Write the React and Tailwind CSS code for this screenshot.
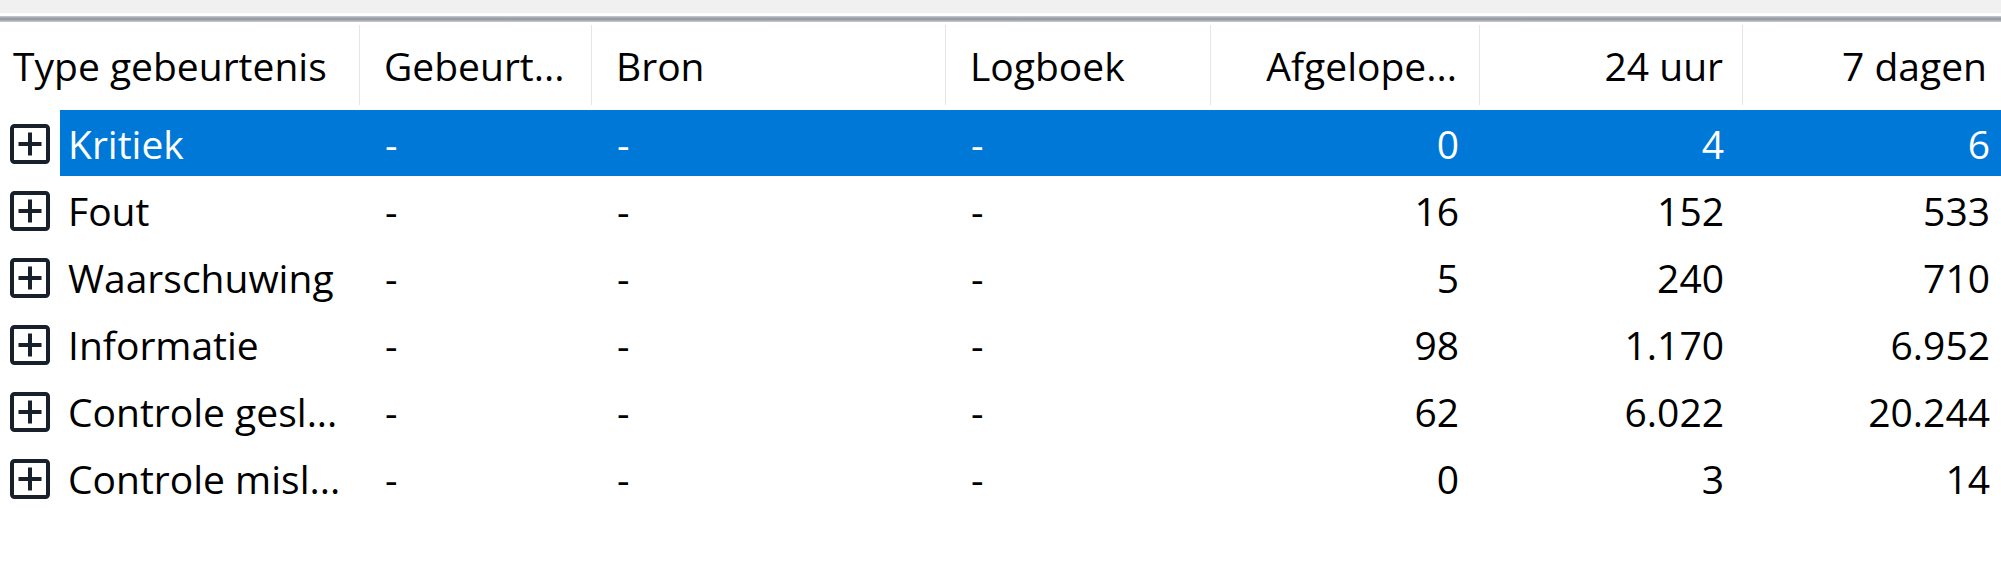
import React from "react";

const rows = [
  ["Kritiek", "0", "4", "6"],
  ["Fout", "16", "152", "533"],
  ["Waarschuwing", "5", "240", "710"],
  ["Informatie", "98", "1.170", "6.952"],
  ["Controle gesl...", "62", "6.022", "20.244"],
  ["Controle misl...", "0", "3", "14"],
];

function PlusBox() {
  return (
    <svg width="40" height="40" viewBox="0 0 40 40" className="block">
      <rect x="2" y="2" width="36" height="36" rx="2.5" fill="white" stroke="#18212b" strokeWidth="4" />
      <line x1="8.5" y1="20" x2="31.5" y2="20" stroke="#18212b" strokeWidth="4" />
      <line x1="20" y1="8.5" x2="20" y2="31.5" stroke="#18212b" strokeWidth="4" />
    </svg>
  );
}

function HeaderCell({ w, children, right, pl, pr }) {
  return (
    <div className={`${w} shrink-0 pt-[3px] pb-[5px] h-full`}>
      <div
        className={`h-full border-r border-[#e5e5e5] flex items-center ${right ? "justify-end" : ""} ${pl || ""} ${pr || ""} whitespace-nowrap`}
      >
        {children}
      </div>
    </div>
  );
}

export default function App() {
  return (
    <div className="w-[2001px] h-[564px] overflow-hidden bg-white text-black font-['Open_Sans',sans-serif] font-medium text-[39px] leading-none">
      <div className="h-[13px] bg-[#f0f0f0]" />
      <div className="h-[3px] bg-white" />
      <div className="h-[6px] bg-gradient-to-b from-[#c9ccd1] via-[#8e949c] to-[#c9ccd1]" />
      <div className="w-[2006px] h-[88px] flex">
        <HeaderCell w="w-[360px]" pl="pl-[13px]">Type gebeurtenis</HeaderCell>
        <HeaderCell w="w-[232px]" pl="pl-[24px]">Gebeurt...</HeaderCell>
        <HeaderCell w="w-[354px]" pl="pl-[24px]">Bron</HeaderCell>
        <HeaderCell w="w-[265px]" pl="pl-[24px]">Logboek</HeaderCell>
        <HeaderCell w="w-[269px]" right pr="pr-[22px]">Afgelope...</HeaderCell>
        <HeaderCell w="w-[263px]" right pr="pr-[19px]">24 uur</HeaderCell>
        <HeaderCell w="w-[263px]" right pr="pr-[18px]">7 dagen</HeaderCell>
      </div>
      <div className="flex flex-col">
        {rows.map((r, i) => {
          const sel = i === 0;
          return (
            <div key={i} className="w-[2006px] h-[67px] flex">
              <div className="w-[60px] shrink-0 flex items-center pl-[10px]">
                <PlusBox />
              </div>
              <div
                className={`flex h-[66px] items-center whitespace-nowrap ${sel ? "bg-[#0078d7] text-white" : ""}`}
              >
                <div className="w-[300px] shrink-0 pl-[8px]">{r[0]}</div>
                <div className="w-[232px] shrink-0 pl-[25px]">-</div>
                <div className="w-[354px] shrink-0 pl-[25px]">-</div>
                <div className="w-[265px] shrink-0 pl-[25px]">-</div>
                <div className="w-[269px] shrink-0 pr-[21px] text-right">{r[1]}</div>
                <div className="w-[263px] shrink-0 pr-[19px] text-right">{r[2]}</div>
                <div className="w-[263px] shrink-0 pr-[16px] text-right">{r[3]}</div>
              </div>
            </div>
          );
        })}
      </div>
    </div>
  );
}
